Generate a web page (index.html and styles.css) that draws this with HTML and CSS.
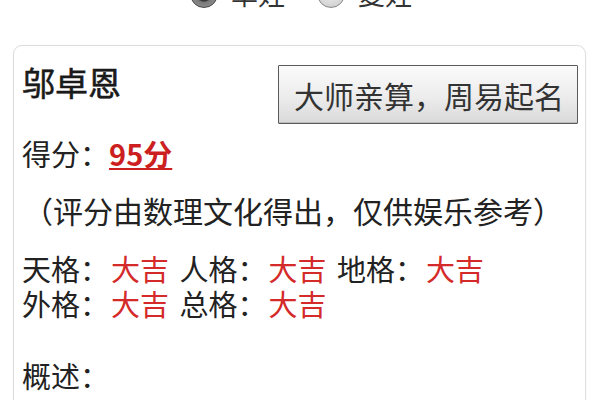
FILE: index.html
```html
<!DOCTYPE html>
<html lang="zh-CN">
<head>
<meta charset="utf-8">
<title>姓名测试</title>
<link rel="stylesheet" href="styles.css">
</head>
<body>
<div class="gender-row">
  <label class="opt"><span class="radio checked"></span><span class="opt-text">单姓</span></label>
  <label class="opt"><span class="radio"></span><span class="opt-text">复姓</span></label>
</div>
<div class="card">
  <div class="card-head">
    <div class="name">邬卓恩</div>
    <button class="master-btn" type="button">大师亲算，周易起名</button>
  </div>
  <p class="line score">得分：<a class="score-val" href="#">95分</a></p>
  <p class="line note">（评分由数理文化得出，仅供娱乐参考）</p>
  <div class="grid-lines">
    <div class="line">天格：<span class="red">大吉</span> 人格：<span class="red">大吉</span> 地格：<span class="red">大吉</span></div>
    <div class="line">外格：<span class="red">大吉</span> 总格：<span class="red">大吉</span></div>
  </div>
  <p class="line summary">概述：</p>
</div>
</body>
</html>
```
FILE: styles.css
```css
html, body {
  margin: 0;
  padding: 0;
  background: #ffffff;
}
body {
  font-family: "Noto Sans CJK SC", "Noto Sans", sans-serif;
  color: #222222;
  overflow: hidden;
}
.gender-row {
  display: flex;
  justify-content: center;
  align-items: center;
  gap: 32px;
  height: 28px;
  margin-top: -20px;
  padding-left: 2px;
}
.opt {
  display: flex;
  align-items: center;
  gap: 13px;
}
.radio {
  display: block;
  width: 26px;
  height: 26px;
  border-radius: 50%;
  border: 1px solid #8a8a8a;
  background: radial-gradient(circle at 50% 35%, #f4f4f4 0%, #d6d6d6 70%, #bdbdbd 100%);
}
.radio.checked {
  border-color: #444444;
  background: radial-gradient(circle at 50% 50%, #2e2e2e 0%, #3a3a3a 38%, #7a7a7a 45%, #9a9a9a 100%);
}
.opt-text {
  font-size: 27px;
  line-height: 28px;
  color: #333333;
}
.card {
  margin: 37px 14px 0 13px;
  border: 1px solid #dedede;
  border-radius: 9px;
  padding: 19px 7px 40px 8px;
  box-shadow: 0 0 2px rgba(0, 0, 0, 0.06);
  height: 600px;
}
.card-head {
  display: flex;
  justify-content: space-between;
  align-items: flex-start;
}
.name {
  font-size: 33px;
  line-height: 40px;
  font-weight: normal;
  -webkit-text-stroke: 0.6px #1a1a1a;
  margin-top: -3px;
  color: #1a1a1a;
}
.master-btn {
  font-family: "Noto Sans CJK SC", "Noto Sans", sans-serif;
  font-size: 30px;
  line-height: 38px;
  height: 59px;
  padding: 0 13px 0 15px;
  color: #333333;
  border: 1px solid #5a5a5a;
  border-radius: 1px;
  background: linear-gradient(#fbfbfb 0%, #ececec 55%, #d9d9d9 100%);
  box-shadow: inset 0 -1px 0 #bdbdbd;
  margin: 0;
}
.line {
  font-size: 29px;
  line-height: 35px;
  margin: 0;
  word-spacing: 4px;
}
.score {
  margin-top: 12px;
}
.score-val {
  color: #cc1f1f;
  font-weight: bold;
  text-decoration: underline;
  text-underline-offset: 2px;
}
.note {
  font-size: 30px;
  margin-top: 22px;
  margin-left: 1px;
}
.grid-lines {
  margin-top: 23px;
}
.red {
  color: #d42a2a;
  margin-left: 2px;
}
.summary {
  margin-top: 37px;
}
```
